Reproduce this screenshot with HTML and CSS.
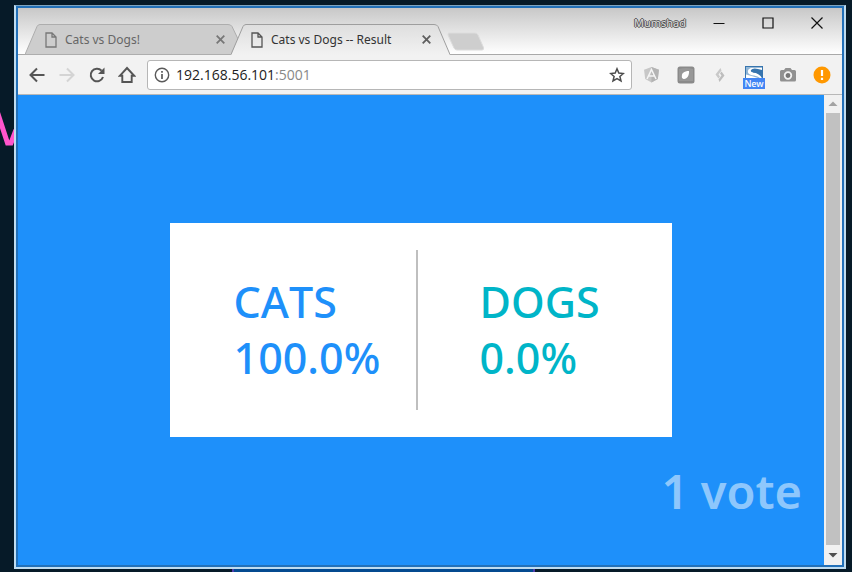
FILE: index.html
```html
<!DOCTYPE html>
<html lang="en">
<head>
<meta charset="utf-8">
<title>Cats vs Dogs -- Result</title>
<link rel="stylesheet" href="styles.css">
</head>
<body>
<div class="desktop">
  <svg class="scribble" width="14" height="44" viewBox="0 0 14 44" aria-hidden="true"><path d="M-3 7L7.500 39H11L16 26" fill="none" stroke="#ff55cc" stroke-width="5"/></svg>
  <div class="window">
    <header class="titlebar">
      <nav class="tabs">
        <div class="tab">
          <svg class="tab-shape" width="214" height="31" viewBox="0 0 214 31" aria-hidden="true"><path d="M0 30.500L12 2.500Q13 .5 15 .5H203Q206 .5 207 2.500L214 17V30.500Z" fill="#cdcdcd" stroke="#adadad"/></svg>
          <svg class="page-icon" width="12" height="16" viewBox="0 0 12 16" aria-hidden="true"><path d="M1 1H7L11 5V15H1ZM7 1V5H11" fill="none" stroke="#777" stroke-width="1.300"/></svg>
          <a class="tab-title muted" href="#">Cats vs Dogs!</a>
          <button class="tab-close" aria-label="Close tab"><svg width="9" height="9" viewBox="0 0 9 9"><path d="M.7 .7L8.300 8.300M8.300 .7L.7 8.300" stroke="#777" stroke-width="1.800"/></svg></button>
        </div>
        <div class="tab active">
          <svg class="tab-shape" width="219" height="31" viewBox="0 0 219 31" aria-hidden="true"><defs><linearGradient id="tabfill" x2="0" y2="1"><stop stop-color="#dedede"/><stop offset="1" stop-color="#f2f2f2"/></linearGradient></defs><path d="M0 31L12 2.500Q13 .5 15 .5H203Q206 .5 207 2.500L219 31Z" fill="url(#tabfill)"/><path d="M0 30.500L12 2.500Q13 .5 15 .5H203Q206 .5 207 2.500L219 30.500" fill="none" stroke="#9e9e9e"/></svg>
          <svg class="page-icon" width="12" height="16" viewBox="0 0 12 16" aria-hidden="true"><path d="M1 1H7L11 5V15H1ZM7 1V5H11" fill="none" stroke="#555" stroke-width="1.300"/></svg>
          <a class="tab-title" href="#">Cats vs Dogs -- Result</a>
          <button class="tab-close" aria-label="Close tab"><svg width="9" height="9" viewBox="0 0 9 9"><path d="M.7 .7L8.300 8.300M8.300 .7L.7 8.300" stroke="#5f5f5f" stroke-width="1.800"/></svg></button>
        </div>
        <button class="new-tab" aria-label="New tab"><svg width="38" height="19" viewBox="0 0 38 19"><path d="M2 1H28Q30 1 31 3L36.500 15.500Q37 18 35 18H10Q8 18 7 16L1 3Q.5 1 2 1Z" fill="#cecece" stroke="#dcdcdc"/></svg></button>
      </nav>
      <div class="controls">
        <button class="user">Mumshad</button>
        <button class="control" aria-label="Minimize"><svg width="12" height="12" viewBox="0 0 12 12"><path d="M.5 6.500H11.500" stroke="#111"/></svg></button>
        <button class="control" aria-label="Maximize"><svg width="12" height="12" viewBox="0 0 12 12"><path d="M1 1H11V11H1Z" fill="none" stroke="#111" stroke-width="1.200"/></svg></button>
        <button class="control" aria-label="Close"><svg width="12" height="12" viewBox="0 0 12 12"><path d="M.5 .5L11.500 11.500M11.500 .5L.5 11.500" stroke="#111" stroke-width="1.200"/></svg></button>
      </div>
    </header>
    <div class="toolbar">
      <div class="navigation">
        <button aria-label="Back"><svg width="18" height="18" viewBox="0 0 18 18"><path d="M16.500 9H3M9 2.500L2.500 9L9 15.500" fill="none" stroke="#555" stroke-width="2"/></svg></button>
        <button aria-label="Forward"><svg width="18" height="18" viewBox="0 0 18 18"><path d="M1.500 9H15M9 2.500L15.500 9L9 15.500" fill="none" stroke="#d4d4d4" stroke-width="2"/></svg></button>
        <button aria-label="Reload"><svg width="18" height="18" viewBox="0 0 18 18"><path d="M15 11A6.300 6.300 0 1 1 13.600 4.600" fill="none" stroke="#555" stroke-width="2"/><path d="M16.500 1.500V8H10Z" fill="#555"/></svg></button>
        <button aria-label="Home"><svg width="18" height="18" viewBox="0 0 18 18"><path d="M1.800 9.800L9 2L16.200 9.800H13.700V16H4.300V9.800Z" fill="none" stroke="#555" stroke-width="1.900"/></svg></button>
      </div>
      <div class="address">
        <svg width="16" height="16" viewBox="0 0 16 16" aria-hidden="true"><circle cx="8" cy="8" r="6.700" fill="none" stroke="#5a5a5a" stroke-width="1.400"/><path d="M8 7V12M8 4V5.700" stroke="#5a5a5a" stroke-width="1.700"/></svg>
        <a class="url" href="#">192.168.56.101<span class="port">:5001</span></a>
        <button aria-label="Bookmark"><svg width="16" height="16" viewBox="0 0 16 16"><path d="M8 1.800L9.800 6.100L14.400 6.500L10.900 9.500L12 14L8 11.600L4 14L5.100 9.500L1.600 6.500L6.200 6.100Z" fill="none" stroke="#4c4c4c" stroke-width="1.500"/></svg></button>
      </div>
      <div class="extensions">
        <button aria-label="Angular"><svg width="18" height="18" viewBox="0 0 18 18"><path d="M8.500 1L16 3.700L14.800 13L8.500 16.500L2.200 13L1 3.700Z" fill="#c7c7c7"/><path d="M8.500 1L16 3.700L14.800 13L8.500 16.500Z" fill="#b4b4b4"/><path d="M4 13L8.500 3.500L13 13M6 10H11" fill="none" stroke="#f5f5f5" stroke-width="1.500"/></svg></button>
        <button aria-label="Reader"><svg width="18" height="18" viewBox="0 0 18 18"><rect x=".5" y=".5" width="17" height="17" rx="2.500" fill="#8a8a8a"/><path d="M2 3Q9 1 16 3V15H2Z" fill="#989898"/><path d="M5 12C4 7 7 5 12 5C12.500 9 10 13.500 6.500 13Z" fill="#fff"/></svg></button>
        <button aria-label="Link tool"><svg width="18" height="18" viewBox="0 0 18 18"><path d="M9.500 2L4.500 8.500L7.500 12.500L9 10.500L7.500 8.500L10.500 4.500Z" fill="#c9c9c9"/><path d="M8.500 16L13.500 9.500L10.500 5.500L9 7.500L10.500 9.500L7.500 13.500Z" fill="#bdbdbd"/></svg></button>
        <button class="badged" aria-label="Screen capture"><svg width="18" height="18" viewBox="0 0 18 18"><path d="M0 0H18V18H0Z" fill="#3775ae"/><path d="M1 1.500H17V4Q8 1 6 4Q5 6 9 6.500Q16 7 17 12H1Z" fill="#fff"/><path d="M1 1.500H7Q2 3 3 6.500Q4 9 9 9.500Q13 10 15 12H13Q8 10 1 8.500Z" fill="#8fb5d6"/><path d="M8 5Q14 4 17 7V12Q14 7 8 6.500Z" fill="#3775ae"/></svg><span class="badge">New</span></button>
        <button aria-label="Camera"><svg width="18" height="18" viewBox="0 0 18 18"><path d="M2.500 4H5L6.500 2H11.500L13 4H15.500Q17 4 17 5.500V14Q17 15.500 15.500 15.500H2.500Q1 15.500 1 14V5.500Q1 4 2.500 4Z" fill="#919191"/><circle cx="9" cy="9.500" r="3.300" fill="#777" stroke="#f2f2f2" stroke-width="1.800"/></svg></button>
        <button aria-label="Update available"><svg width="18" height="18" viewBox="0 0 18 18"><circle cx="9" cy="9" r="8.500" fill="#ff9800"/><path d="M9 4V10M9 11.800V14" stroke="#fff" stroke-width="2.200"/></svg></button>
      </div>
    </div>
    <div class="viewport">
      <main class="page">
        <section class="results">
          <div class="choice cats"><div>CATS</div><div>100.0%</div></div>
          <div class="choice dogs"><div>DOGS</div><div>0.0%</div></div>
        </section>
        <p class="total">1 vote</p>
      </main>
      <div class="scrollbar" aria-hidden="true">
        <svg width="18" height="18" viewBox="0 0 18 18"><path d="M4.500 11L9 6.500L13.500 11Z" fill="#a3a3a3"/></svg>
        <div class="thumb"></div>
        <svg width="18" height="20" viewBox="0 0 18 20"><path d="M4.500 8L9 12.500L13.500 8Z" fill="#505050"/></svg>
      </div>
    </div>
  </div>
  <div class="behind"></div>
</div>
</body>
</html>
```
FILE: styles.css
```css
* { box-sizing: border-box; }
body {
  margin: 0;
  font-family: "Noto Sans", "Open Sans", sans-serif;
}
button {
  padding: 0;
  border: 0;
  background: none;
  font: inherit;
}
a { color: inherit; text-decoration: none; }
svg { display: block; flex: none; }

.desktop {
  position: relative;
  display: flex;
  flex-direction: column;
  min-height: 100vh;
  padding: 5px 6px 0 14px;
  overflow: hidden;
  background: #061a28;
}
.scribble { position: absolute; left: 0; top: 104px; }
.behind {
  width: 303px;
  height: 3px;
  margin-left: 218px;
  border: solid #503cae;
  border-width: 0 2px;
  background: #044a8f;
}
.window {
  display: flex;
  flex: 1;
  flex-direction: column;
  border: 2px solid #bfdcf0;
  border-top: 1px solid #7fa5c0;
  padding: 2px;
  background: #2270b8;
}

.titlebar {
  display: flex;
  justify-content: space-between;
  height: 47px;
  border-bottom: 1px solid #a9a9a9;
  background: linear-gradient(#c8c8c8, #fff);
}
.tabs {
  display: flex;
  align-items: flex-end;
  height: 47px;
  padding-left: 7px;
}
.tab {
  position: relative;
  display: flex;
  align-items: center;
  width: 206px;
  height: 31px;
  padding-left: 20px;
}
.tab.active { z-index: 1; width: 216px; }
.tab-shape { position: absolute; left: 0; top: 0; }
.page-icon, .tab-title, .tab-close { position: relative; }
.tab-title {
  width: 151px;
  margin-left: 8px;
  font-size: 12px;
  color: #333;
  white-space: nowrap;
}
.tab-title.muted { color: #666; }
.new-tab { align-self: flex-end; margin-bottom: 4px; }
.controls { display: flex; align-items: center; height: 29px; padding-right: 1px; }
.user {
  margin-right: 8px;
  font-size: 11px;
  color: #ddd;
  text-shadow: 1px 0 #555, -1px 0 #555, 0 1px #555, 0 -1px #555;
}
.control {
  display: flex;
  justify-content: center;
  width: 49px;
}

.toolbar {
  display: flex;
  align-items: center;
  height: 40px;
  padding: 0 11px 0 10px;
  border-bottom: 1px solid #b8b8b8;
  background: #f2f2f2;
}
.navigation { display: flex; gap: 12px; margin-right: 11px; }
.address {
  display: flex;
  flex: 1;
  align-items: center;
  height: 30px;
  padding: 0 6px;
  border: 1px solid #b6b6b6;
  border-radius: 3px;
  background: #fff;
}
.url { flex: 1; margin-left: 6px; font-size: 14px; font-family: "Open Sans", sans-serif; color: #222; }
.port { color: #888; }
.extensions { display: flex; gap: 16px; margin-left: 11px; }
.badged { position: relative; }
.badge {
  position: absolute;
  left: -2px;
  top: 12px;
  width: 22px;
  background: #4285f4;
  color: #fff;
  font-size: 9px;
  font-weight: 500;
  line-height: 11px;
  text-align: center;
}

.viewport { display: flex; flex: 1; }
.page {
  display: flex;
  flex: 1;
  flex-direction: column;
  justify-content: space-between;
  padding: 128px 22px 42px;
  background: #1e90fa;
}
.results {
  display: grid;
  grid-template-columns: 248fr 255fr;
  width: 66%;
  margin: 0 auto;
  padding: 27px 0;
  background: #fff;
}
.choice {
  padding: 24px 0 24px 64px;
  font-size: 43px;
  font-weight: 500;
  font-kerning: none;
  line-height: 56px;
}
.cats { border-right: 2px solid #bfbfbf; color: #1e90fa; }
.dogs { padding-left: 62px; color: #00b5c8; }
.total {
  margin: 0;
  font-size: 47px;
  font-weight: 600;
  line-height: 64px;
  text-align: right;
  color: #8ec7fc;
}
.scrollbar {
  display: flex;
  flex-direction: column;
  width: 18px;
  background: #f1f1f1;
}
.thumb { flex: 1; margin: 0 2px; background: #c1c1c1; }
```
